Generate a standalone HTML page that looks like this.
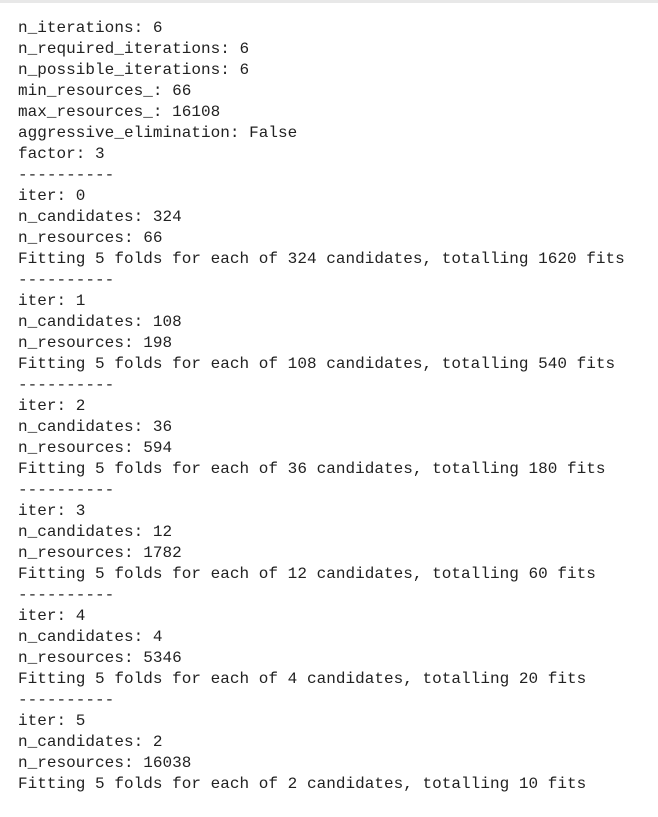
<!DOCTYPE html>
<html><head><style>
html,body{margin:0;padding:0;background:#fff;width:658px;height:817px;overflow:hidden}
.bar{position:absolute;left:0;top:0;width:658px;height:3px;background:#e8e8e8}
pre{position:absolute;left:18px;top:18px;margin:0;font-family:"Liberation Mono",monospace;font-size:16px;line-height:21px;color:#212121;letter-spacing:0.03px}
</style></head><body><div class="bar"></div><pre>n_iterations: 6
n_required_iterations: 6
n_possible_iterations: 6
min_resources_: 66
max_resources_: 16108
aggressive_elimination: False
factor: 3
----------
iter: 0
n_candidates: 324
n_resources: 66
Fitting 5 folds for each of 324 candidates, totalling 1620 fits
----------
iter: 1
n_candidates: 108
n_resources: 198
Fitting 5 folds for each of 108 candidates, totalling 540 fits
----------
iter: 2
n_candidates: 36
n_resources: 594
Fitting 5 folds for each of 36 candidates, totalling 180 fits
----------
iter: 3
n_candidates: 12
n_resources: 1782
Fitting 5 folds for each of 12 candidates, totalling 60 fits
----------
iter: 4
n_candidates: 4
n_resources: 5346
Fitting 5 folds for each of 4 candidates, totalling 20 fits
----------
iter: 5
n_candidates: 2
n_resources: 16038
Fitting 5 folds for each of 2 candidates, totalling 10 fits</pre></body></html>
